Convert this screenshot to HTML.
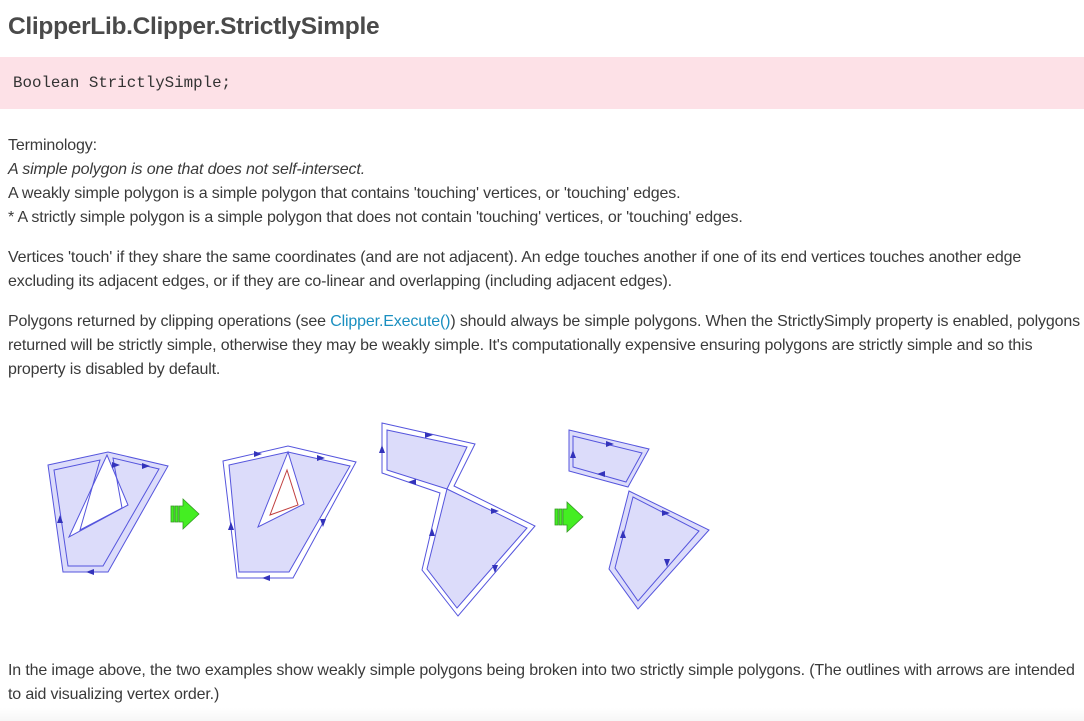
<!DOCTYPE html>
<html><head><meta charset="utf-8"><style>
body{margin:0;width:1084px;height:721px;overflow:hidden;background:#fff;font-family:"Liberation Sans",sans-serif;color:#3a3a3a;position:relative}
h1{position:absolute;left:8px;top:13px;margin:0;font-size:24.5px;font-weight:bold;color:#4a4a4a;letter-spacing:-0.3px}
.code{position:absolute;left:0;top:57px;width:1084px;height:52px;background:#fde1e7}
.code span{position:absolute;left:13px;top:17px;font-family:"Liberation Mono",monospace;font-size:15.8px;color:#333}
.t{position:absolute;left:8px;font-size:16px;line-height:24px;margin:0;white-space:nowrap;letter-spacing:-0.15px}
a{color:#1a8fc0;text-decoration:none}
.fade{position:absolute;left:0;top:708px;width:1084px;height:13px;background:linear-gradient(#fff,#f6f6f6)}
</style></head><body>
<h1>ClipperLib.Clipper.StrictlySimple</h1>
<div class="code"><span>Boolean StrictlySimple;</span></div>
<p class="t" style="top:134px">Terminology:<br><i>A simple polygon is one that does not self-intersect.</i><br>A weakly simple polygon is a simple polygon that contains 'touching' vertices, or 'touching' edges.<br>* A strictly simple polygon is a simple polygon that does not contain 'touching' vertices, or 'touching' edges.</p>
<p class="t" style="top:246px">Vertices 'touch' if they share the same coordinates (and are not adjacent). An edge touches another if one of its end vertices touches another edge<br>excluding its adjacent edges, or if they are co-linear and overlapping (including adjacent edges).</p>
<p class="t" style="top:310px">Polygons returned by clipping operations (see <a>Clipper.Execute()</a>) should always be simple polygons. When the StrictlySimply property is enabled, polygons<br>returned will be strictly simple, otherwise they may be weakly simple. It's computationally expensive ensuring polygons are strictly simple and so this<br>property is disabled by default.</p>
<svg style="position:absolute;left:0;top:0" width="1084" height="721">
<g stroke="#5555dd" stroke-width="1" fill="none">
<path d="M48,465 L108,452 L168,466 L108,572 L63,572 Z M107,455 L69,537 L128,505 Z" fill="#dcdcfa" fill-rule="evenodd"/>
<path d="M54,470 L100,460 L80,530 L122,508 L113,458 L159,469 L103,566 L68,566 Z"/>
<path d="M229,465 L288,452 L350,466 L289,572 L239,572 Z M288,452 L258,527 L304,504 Z" fill="#dcdcfa" fill-rule="evenodd"/>
<path d="M223,461 L288,446 L356,462 L293,578 L237,578 Z"/>
<path d="M287,470 L270,515 L298,505 Z" stroke="#c04040"/>
<path d="M387,430 L467,447 L447,489 L387,470 Z M447,489 L527,528 L457,608 L427,569 Z" fill="#dcdcfa"/>
<path d="M382,423 L475,444 L454,486 L535,526 L458,616 L422,570 L440,493 L382,473 Z"/>
<path d="M569,430 L649,449 L628,487 L569,471 Z" fill="#dcdcfa"/>
<path d="M573,436 L642,453 L626,482 L573,467 Z"/>
<path d="M629,491 L709,530 L638,609 L609,569 Z" fill="#dcdcfa"/>
<path d="M633,497 L699,531 L638,601 L615,568 Z"/>
</g>
<g fill="#3333bb">
<path d="M120,465 l-8,-3 l0,6z"/><path d="M60,515 l-3,8 l6,0z"/><path d="M86,572 l8,-3 l0,6z"/><path d="M150,466 l-8,-3 l0,6z"/>
<path d="M262,454 l-8,-3 l0,6z"/><path d="M325,458 l-8,-3 l0,6z"/><path d="M231,522 l-3,8 l6,0z"/><path d="M262,578 l8,-3 l0,6z"/><path d="M323,527 l-3,-8 l6,0z"/>
<path d="M433,435 l-8,-3 l0,6z"/><path d="M382,445 l-3,8 l6,0z"/><path d="M408,482 l8,-3 l0,6z"/><path d="M499,511 l-8,-3 l0,6z"/><path d="M432,528 l-3,8 l6,0z"/><path d="M495,573 l3,-8 l-6,0z"/>
<path d="M614,444 l-8,-3 l0,6z"/><path d="M573,450 l-3,8 l6,0z"/><path d="M597,474 l8,-3 l0,6z"/><path d="M670,513 l-8,-3 l0,6z"/><path d="M623,530 l-3,8 l6,0z"/><path d="M667,567 l3,-8 l-6,0z"/>
</g>
<g fill="#44ee22" stroke="#339922" stroke-width="0.8">
<path d="M171,506 h3 v16 h-3z M175,506 h3 v16 h-3z M179,506 h4 v-7 l16,15 l-16,15 v-7 h-4z"/>
<path d="M555,509 h3 v16 h-3z M559,509 h3 v16 h-3z M563,509 h4 v-7 l16,15 l-16,15 v-7 h-4z"/>
</g>
</svg>
<p class="t" style="top:659px">In the image above, the two examples show weakly simple polygons being broken into two strictly simple polygons. (The outlines with arrows are intended<br>to aid visualizing vertex order.)</p>
<div class="fade"></div>
</body></html>
